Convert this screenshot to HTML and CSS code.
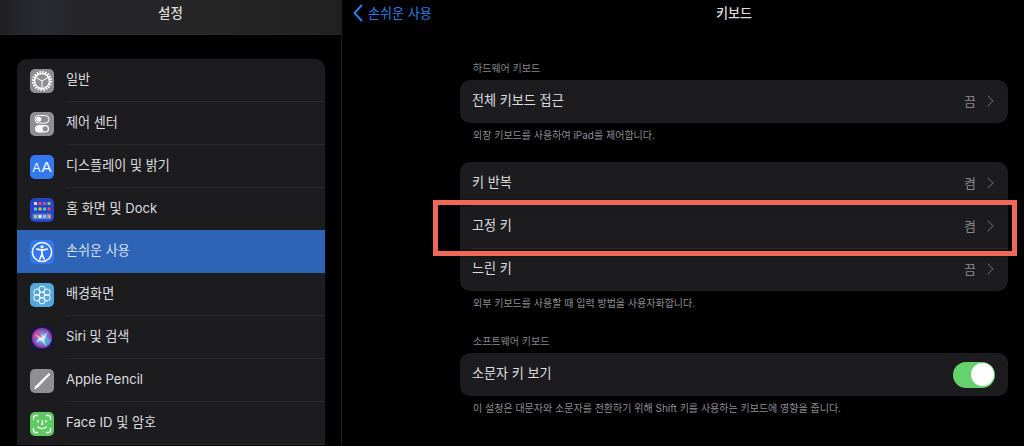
FILE: index.html
```html
<!DOCTYPE html>
<html lang="ko">
<head>
    <meta charset="UTF-8">
    <meta name="viewport" content="width=device-width, initial-scale=1.0">
    <title>키보드</title>
    <link rel="stylesheet" href="styles.css">
</head>
<body>
    <div class="sidebar">
        <div class="side-header">설정</div>
        <ul class="side-list">
            <li class="side-row">
                <span class="icon icon-gray">
                    <svg viewBox="0 0 24 24" width="24" height="24" fill="none" stroke="#fff">
                        <circle cx="12" cy="12" r="8.6" stroke-width="3" stroke-dasharray="1.5 1.2"/>
                        <circle cx="12" cy="12" r="7.400" stroke-width="1.300"/>
                        <path d="M12 12 6 8.500M12 12l6-3.500M12 12v7" stroke-width="1"/>
                    </svg>
                </span>
                <span class="side-label">일반</span>
            </li>
            <li class="side-row">
                <span class="icon icon-gray">
                    <svg viewBox="0 0 24 24" width="24" height="24">
                        <rect x="5" y="3.5" width="14" height="7.6" rx="3.8" fill="none" stroke="#fff" stroke-width="1"/>
                        <circle cx="8.8" cy="7.3" r="2.5" fill="#fff"/>
                        <rect x="5" y="13" width="14" height="7.6" rx="3.8" fill="#fff"/>
                        <circle cx="15.2" cy="16.8" r="2.6" fill="#8e8e93"/>
                    </svg>
                </span>
                <span class="side-label">제어 센터</span>
            </li>
            <li class="side-row">
                <span class="icon icon-blue icon-text"><small>A</small>A</span>
                <span class="side-label">디스플레이 및 밝기</span>
            </li>
            <li class="side-row">
                <span class="icon icon-dock">
                    <svg viewBox="0 0 24 24" width="24" height="24">
                        <rect x="4" y="4" width="3" height="3" rx=".6" fill="#d9d9e8"/>
                        <rect x="8.500" y="4" width="3" height="3" rx=".6" fill="#e8504a"/>
                        <rect x="13" y="4" width="3" height="3" rx=".6" fill="#9a5ae0"/>
                        <rect x="17.500" y="4" width="3" height="3" rx=".6" fill="#8ed04a"/>
                        <rect x="4" y="9.500" width="3" height="3" rx=".6" fill="#5ac8fa"/>
                        <rect x="8.500" y="9.500" width="3" height="3" rx=".6" fill="#f5b93a"/>
                        <rect x="13" y="9.500" width="3" height="3" rx=".6" fill="#4cd0c0"/>
                        <rect x="17.500" y="9.500" width="3" height="3" rx=".6" fill="#ef4a5a"/>
                        <rect x="2.500" y="15.500" width="19" height="6" rx="1.2" fill="#5a78d8"/>
                        <rect x="4" y="17" width="3" height="3" rx=".6" fill="#7fdc7a"/>
                        <rect x="8.500" y="17" width="3" height="3" rx=".6" fill="#f2f2f7"/>
                        <rect x="13" y="17" width="3" height="3" rx=".6" fill="#8ac4f5"/>
                        <rect x="17.500" y="17" width="3" height="3" rx=".6" fill="#f0a050"/>
                    </svg>
                </span>
                <span class="side-label">홈 화면 및 Dock</span>
            </li>
            <li class="side-row selected">
                <span class="icon icon-blue">
                    <svg viewBox="0 0 24 24" width="24" height="24" fill="none" stroke="#fff">
                        <circle cx="12" cy="12" r="9.600" stroke-width="1.500"/>
                        <circle cx="12" cy="6.8" r="1.600" fill="#fff" stroke="none"/>
                        <path d="M6.8 9.200 12 10.200l5.200-1M12 10.200v4.200M12 14.400l-2.200 4.600M12 14.400l2.200 4.600" stroke-width="1.700" stroke-linecap="round"/>
                    </svg>
                </span>
                <span class="side-label">손쉬운 사용</span>
            </li>
            <li class="side-row">
                <span class="icon icon-wall">
                    <svg viewBox="0 0 24 24" width="24" height="24" fill="none" stroke="#fff" stroke-width="1">
                        <circle cx="12" cy="12" r="3"/>
                        <circle cx="12" cy="6.300" r="3.200"/>
                        <circle cx="12" cy="17.700" r="3.200"/>
                        <circle cx="7" cy="9.200" r="3.200"/>
                        <circle cx="17" cy="9.200" r="3.200"/>
                        <circle cx="7" cy="14.800" r="3.200"/>
                        <circle cx="17" cy="14.800" r="3.200"/>
                    </svg>
                </span>
                <span class="side-label">배경화면</span>
            </li>
            <li class="side-row">
                <span class="icon icon-siri">
                    <svg viewBox="0 0 24 24" width="24" height="24">
                        <defs>
                            <radialGradient id="siri-glow">
                                <stop offset="0" stop-color="#dff0ff"/>
                                <stop offset=".5" stop-color="#5f8fd8"/>
                                <stop offset=".85" stop-color="#9a3cb8"/>
                                <stop offset="1" stop-color="#4a2a80"/>
                            </radialGradient>
                        </defs>
                        <circle cx="12" cy="12" r="10.500" fill="url(#siri-glow)"/>
                        <path d="M3 12a9 9 0 0 1 6-8l3 8z" fill="#e0468a" opacity=".7"/>
                        <path d="M21 13a9 9 0 0 1-6 8l-3-9z" fill="#40c8d0" opacity=".6"/>
                        <path d="M4 8 12 12l6-7-4 9 2 6-5-6-5 3 3-5z" fill="#fff" opacity=".7"/>
                    </svg>
                </span>
                <span class="side-label">Siri 및 검색</span>
            </li>
            <li class="side-row">
                <span class="icon icon-gray">
                    <svg viewBox="0 0 24 24" width="24" height="24">
                        <path d="M18.800 4 20.300 5.500 7.300 19 4 20.500l1.300-3.200z" fill="#fff"/>
                    </svg>
                </span>
                <span class="side-label">Apple Pencil</span>
            </li>
            <li class="side-row">
                <span class="icon icon-green">
                    <svg viewBox="0 0 24 24" width="24" height="24" fill="none" stroke="#fff" stroke-width="1.300" stroke-linecap="round">
                        <path d="M3.500 7.500V5.500a2 2 0 0 1 2-2h2M16.500 3.500h2a2 2 0 0 1 2 2v2M20.500 16.500v2a2 2 0 0 1-2 2h-2M7.500 20.500h-2a2 2 0 0 1-2-2v-2"/>
                        <path d="M8 8.500v1.600M16 8.500v1.600M12.400 8.500v3.600h-.9M7.800 15c2.300 2.200 6.100 2.200 8.400 0"/>
                    </svg>
                </span>
                <span class="side-label">Face ID 및 암호</span>
            </li>
        </ul>
    </div>

    <div class="main">
        <div class="main-header">
            <a class="back" href="#">
                <svg viewBox="0 0 10 18" width="10" height="18" fill="none" stroke="#2f7bdf" stroke-width="2" stroke-linecap="round" stroke-linejoin="round">
                    <path d="M8.500 1.500 1.500 9l7 7.500"/>
                </svg>
                손쉬운 사용
            </a>
            <span class="main-title">키보드</span>
        </div>

        <div class="content">
            <p class="group-title">하드웨어 키보드</p>
            <div class="card">
                <div class="row">
                    <span class="row-label">전체 키보드 접근</span>
                    <span class="value">끔<i class="chev"></i></span>
                </div>
            </div>
            <p class="group-note">외장 키보드를 사용하여 iPad를 제어합니다.</p>

            <div class="card">
                <div class="row">
                    <span class="row-label">키 반복</span>
                    <span class="value">켬<i class="chev"></i></span>
                </div>
                <div class="row">
                    <span class="row-label">고정 키</span>
                    <span class="value">켬<i class="chev"></i></span>
                </div>
                <div class="row">
                    <span class="row-label">느린 키</span>
                    <span class="value">끔<i class="chev"></i></span>
                </div>
            </div>
            <p class="group-note">외부 키보드를 사용할 때 입력 방법을 사용자화합니다.</p>

            <p class="group-title group-second">소프트웨어 키보드</p>
            <div class="card">
                <div class="row">
                    <span class="row-label">소문자 키 보기</span>
                    <span class="toggle"><span class="knob"></span></span>
                </div>
            </div>
            <p class="group-note">이 설정은 대문자와 소문자를 전환하기 위해 Shift 키를 사용하는 키보드에 영향을 줍니다.</p>
        </div>

        <div class="highlight-box"></div>
    </div>
</body>
</html>
```
FILE: styles.css
```css
* {
    box-sizing: border-box;
}
html, body {
    margin: 0;
    height: 446px;
    overflow: hidden;
}
body {
    display: flex;
    background-color: #000;
    color: #dedee0;
    font-family: Inter, "Noto Sans CJK KR", sans-serif;
    font-size: 13.1px;
}
.sidebar {
    width: 342px;
    flex: none;
    border-right: 1px solid #1e1e20;
}
.side-header {
    height: 35px;
    line-height: 26px;
    text-align: center;
    color: #dcdcdc;
    font-size: 13.5px;
    font-weight: 500;
    background: linear-gradient(90deg, #1f1f22 0, #2a2a33 12%, #26262a 22%, #262626 60%, #202020 100%);
    border-bottom: 1px solid #2a2a2a;
}
.side-list {
    list-style: none;
    margin: 24px 16px 0 17px;
    padding: 0;
    background-color: #1c1c1e;
    border-radius: 10px 10px 0 0;
}
.side-row {
    position: relative;
    display: flex;
    align-items: center;
    height: 43px;
    padding-left: 13px;
    gap: 12px;
}
.side-row::after {
    content: "";
    position: absolute;
    left: 49px;
    right: 0;
    bottom: 0;
    height: 1px;
    background-color: #2a2a2c;
}
.side-row.selected {
    margin-top: -1px;
    background-color: #2d64b5;
    color: #d3e0f2;
}
.side-row.selected::after {
    display: none;
}
.side-label,
.row-label {
    padding-bottom: 4px;
}
.icon {
    width: 24px;
    height: 24px;
    border-radius: 5px;
    display: flex;
    align-items: center;
    justify-content: center;
    flex: none;
    overflow: hidden;
}
.icon-gray { background-color: #8e8e93; }
.icon-blue { background-color: #3478f0; }
.icon-dock { background-color: #2545c4; }
.icon-wall { background-color: #54a8dc; }
.icon-siri { background-color: #16173a; }
.icon-green { background-color: #5fca63; }
.icon-text {
    color: #fff;
    font-family: "Liberation Sans", sans-serif;
    font-size: 15px;
    align-items: baseline;
    line-height: 24px;
}
.icon-text small {
    font-size: 12px;
    margin-right: 1px;
}
.main {
    position: relative;
    flex: 1;
}
.main-header {
    position: relative;
    height: 27px;
    line-height: 26px;
    padding: 0 16px 0 118px;
    text-align: center;
}
.back {
    position: absolute;
    left: 11px;
    top: 0;
    display: flex;
    align-items: center;
    gap: 5px;
    color: #2f7bdf;
    text-decoration: none;
}
.main-title {
    color: #dcdcdc;
    font-weight: 500;
}
.content {
    margin: 0 16px 0 118px;
    padding-top: 33px;
}
.group-title,
.group-note {
    margin: 0;
    padding-left: 13px;
    font-size: 10px;
    line-height: 14px;
    color: #86868a;
}
.group-title {
    height: 20px;
    padding-top: 1px;
}
.group-note {
    height: 39px;
    padding-top: 5px;
    color: #8e8e92;
}
.group-second {
    margin-top: 3px;
}
.card {
    background-color: #1c1c1e;
    border-radius: 10px;
}
.row {
    position: relative;
    display: flex;
    align-items: center;
    justify-content: space-between;
    height: 43px;
    padding: 0 13px 0 12px;
}
.row + .row::before {
    content: "";
    position: absolute;
    left: 12px;
    right: 0;
    top: 0;
    height: 1px;
    background-color: #2c2c2e;
}
.value {
    display: flex;
    align-items: center;
    padding-bottom: 2px;
    color: #85858a;
    font-size: 13px;
}
.chev {
    width: 8px;
    height: 8px;
    margin-left: 8px;
    margin-right: 3px;
    border-top: 1.5px solid #5c5c60;
    border-right: 1.5px solid #5c5c60;
    transform: rotate(45deg);
}
.toggle {
    display: flex;
    justify-content: flex-end;
    align-items: center;
    width: 42px;
    height: 26px;
    padding: 1px;
    border-radius: 13px;
    background-color: #65d26b;
}
.knob {
    width: 23px;
    height: 23px;
    border-radius: 50%;
    background-color: #fff;
}
.highlight-box {
    position: absolute;
    left: 91px;
    top: 200px;
    width: 584px;
    height: 56px;
    border: 5px solid #f0685a;
    box-shadow: 0 0 4px rgba(0, 0, 0, 0.5), inset 0 0 4px rgba(0, 0, 0, 0.5);
}
```
